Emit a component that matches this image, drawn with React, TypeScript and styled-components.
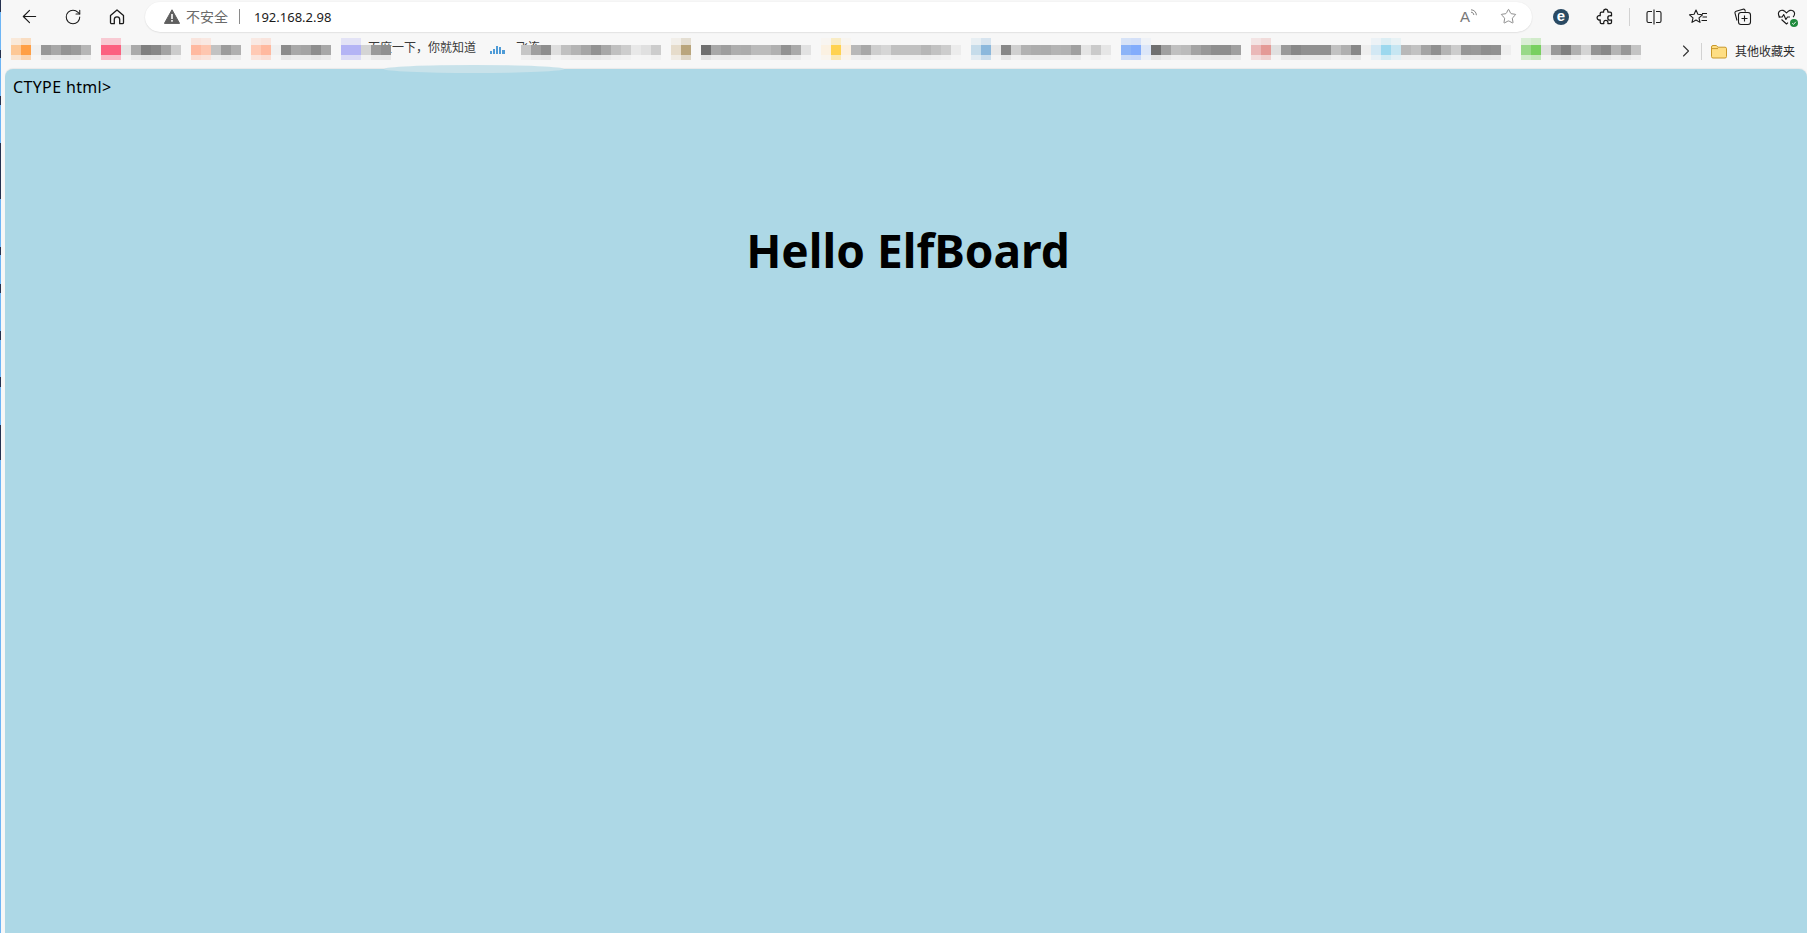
import React from 'react';
import styled, { createGlobalStyle } from 'styled-components';
import { ArrowLeft, RotateCw, Star, ChevronRight } from 'lucide-react';

const UI_FONT = '"Noto Sans", "Noto Sans CJK SC", sans-serif';

// one entry per 10px column of the blurred favourites, starting at x = 11
const MOSAIC: string[] = [
  '#fdc896', '#ff9f45', '#f0f0f0', '#989898', '#a8a8a8', '#949494', '#9c9c9c', '#b6b6b6', '',
  '#fc6180', '#fc6180', '#e4e4e4', '#aaaaaa', '#808080', '#888888', '#a4a4a4', '#cccccc', '',
  '#ffb9a0', '#fec6b0', '#c2c2c2', '#9c9c9c', '#b0b0b0', '',
  '#ffcab5', '#ffb99f', '#f0f0f0', '#8c8c8c', '#a8a8a8', '#a4a4a4', '#8e8e8e', '#a8a8a8', '',
  '#b4b4f5', '#b4b4f5', '#d4d4d4', '#9a9a9a', '#909090',
  '', '', '', '', '', '', '', '', '', '', '', '', '',
  '#c6c6c6', '#9f9f9f', '#8e8e8e', '#dedede', '#c0c0c0', '#b4b4b4', '#a6a6a6', '#929292', '#a8a8a8', '#c0c0c0', '#cdcdcd', '#e8e8e8',
  '#e0e0e0', '#cccccc', '',
  '#e6dccb', '#b9a57c', '',
  '#707070', '#a8a8a8', '#9e9e9e', '#aeaeae', '#acacac', '#bababa', '#bababa', '#b0b0b0', '#929292', '#aaaaaa', '#e2e2e2', '',
  '#fbf1e2', '#ffd250', '#fbefdf', '#b8b8b8', '#a8a8a8', '#cecece', '#d6d6d6', '#c0c0c0', '#c0c0c0', '#c0c0c0', '#b6b6b6', '#c2c2c2', '#cdcdcd', '#ececec', '',
  '#c6dcea', '#8cb8dc', '#e8e8e8', '#888888', '#d0d0d0', '#b2b2b2', '#adadad', '#acacac', '#b4b4b4', '#b2b2b2', '#a0a0a0', '#e4e4e4', '#cacaca', '#e6e6e6', '',
  '#8cb4f8', '#82acfc', '#dce6f8', '#707070', '#a0a0a0', '#c0c0c0', '#bbbbbb', '#a4a4a4', '#989898', '#8e8e8e', '#8e8e8e', '#a0a0a0', '',
  '#eab8b8', '#e49a96', '#e0e0e0', '#9a9a9a', '#888888', '#909090', '#909090', '#909090', '#c2c2c2', '#b0b0b0', '#888888', '#eeeeee',
  '#d2e8f4', '#9cd8ee', '#c6e6f2', '#b8b8b8', '#c2c2c2', '#a4a4a4', '#909090', '#b4b4b4', '#cccccc', '#969696', '#999999', '#8e8e8e', '#919191', '#eeeeee', '',
  '#98d988', '#78d060', '#e0e0e0', '#989898', '#808080', '#b0b0b0', '#d4d4d4', '#949494', '#888888', '#b4b4b4', '#989898', '#c4c4c4',
];

// mix a colour toward the bar background, for the smeared rows around the main one
const fade = (hex: string, keep: number) => {
  if (!hex) return 'transparent';
  const base = [247, 247, 247];
  const parts = [1, 3, 5].map((i, n) => {
    const v = parseInt(hex.slice(i, i + 2), 16);
    return Math.round(v * keep + base[n] * (1 - keep));
  });
  return `rgb(${parts.join(',')})`;
};

const isTinted = (hex: string) => {
  if (!hex) return false;
  return hex.slice(1, 3) !== hex.slice(3, 5) || hex.slice(3, 5) !== hex.slice(5, 7);
};

const GlobalStyle = createGlobalStyle`
  html, body {
    margin: 0;
    height: 100%;
    overflow: hidden;
  }
  #root {
    height: 100%;
  }
`;

const Screen = styled.div`
  display: flex;
  height: 933px;
  overflow: hidden;
  background: #f7f7f7;
  font-family: ${UI_FONT};
`;

const DesktopEdge = styled.div`
  flex: 0 0 1px;
  background: linear-gradient(
    to bottom,
    #25314f 0 12px, #6db5f5 12px 50px,
    #25314f 50px 58px, #6db5f5 58px 96px,
    #25314f 96px 105px, #6db5f5 105px 143px,
    #25314f 143px 199px, #6db5f5 199px 247px,
    #25314f 247px 255px, #6db5f5 255px 284px,
    #25314f 284px 293px, #6db5f5 293px 331px,
    #25314f 331px 340px, #6db5f5 340px 377px,
    #25314f 377px 387px, #6db5f5 387px 425px,
    #25314f 425px 460px, #6db5f5 460px
  );
`;

const Browser = styled.div`
  position: relative;
  flex: 1;
  display: flex;
  flex-direction: column;
  min-width: 0;
`;

const Toolbar = styled.div`
  display: flex;
  align-items: center;
  height: 32px;
  padding-top: 1px;
  box-sizing: border-box;
`;

const ToolButton = styled.div<{ $width: number }>`
  flex: 0 0 ${(p) => p.$width}px;
  display: flex;
  align-items: center;
  justify-content: center;
  position: relative;
  height: 30px;
  color: #1a1a1a;
`;

const NavGroup = styled.div`
  display: flex;
  flex: 0 0 144px;
  padding-left: 6px;
  box-sizing: border-box;
`;

const AddressBar = styled.div`
  flex: 0 0 1387px;
  height: 30px;
  display: flex;
  align-items: center;
  background: #fff;
  border-radius: 15px;
  box-shadow: 0 0.5px 1.5px rgba(0, 0, 0, 0.14);
  padding-left: 19px;
  box-sizing: border-box;
`;

const SecurityLabel = styled.span`
  margin-left: 6px;
  font-size: 14px;
  color: #6a6a6a;
  line-height: 1;
`;

const AddressDivider = styled.span`
  width: 1px;
  height: 15px;
  margin: 0 14px 0 11px;
  background: #8a8a8a;
`;

const Url = styled.span`
  font-size: 13px;
  color: #1b1b1b;
  flex: 1;
`;

const ReadAloud = styled.span`
  position: relative;
  width: 18px;
  height: 18px;
  margin-right: 22px;
  font-size: 15px;
  line-height: 18px;
  color: #777;
  font-family: "Liberation Sans", sans-serif;
`;

const Waves = styled.svg`
  position: absolute;
  top: 1px;
  left: 10px;
`;

const StarSlot = styled.span`
  display: flex;
  margin-right: 15px;
  color: #6e6e6e;
`;

const ToolGroup = styled.div`
  display: flex;
  align-items: center;
  padding-left: 7px;
`;

const ToolDivider = styled.span`
  flex: 0 0 1px;
  height: 18px;
  margin: 0 2px;
  background: #d2d2d2;
`;

const EdgeBadge = styled.span`
  width: 16px;
  height: 16px;
  border-radius: 50%;
  background: #2a4a63;
  color: #fff;
  font: bold 15px/14px "Liberation Sans", sans-serif;
  text-align: center;
`;

const HealthDot = styled.svg`
  position: absolute;
  left: 26px;
  top: 17px;
`;

const FavoritesBar = styled.div`
  position: relative;
  display: flex;
  align-items: flex-start;
  height: 37px;
  padding: 6px 0 0 10px;
  box-sizing: border-box;
`;

const Mosaic = styled.div`
  position: relative;
  flex: 0 0 1630px;
  display: grid;
  grid-auto-flow: column;
  grid-template-rows: 7px 10px 5px;
  grid-auto-columns: 10px;
`;

const Cell = styled.span<{ $color: string }>`
  position: relative;
  background: ${(p) => p.$color};
`;

const PeekLabel = styled.span<{ $left: number }>`
  position: absolute;
  left: ${(p) => p.$left}px;
  top: 3px;
  font-size: 12px;
  line-height: 13px;
  color: #3a3a3a;
  white-space: nowrap;
`;

const CloudIcon = styled.svg`
  position: absolute;
  left: 479px;
  top: 8px;
`;

const FavoritesEnd = styled.div`
  flex: 1;
  display: flex;
  align-items: center;
  height: 26px;
  color: #333;
`;

const ChevronSlot = styled.span`
  display: flex;
  margin-left: 35px;
  color: #333;
`;

const EndDivider = styled.span`
  width: 1px;
  height: 17px;
  margin: 0 9px 0 5px;
  background: #d2d2d2;
`;

const FolderLabel = styled.span`
  margin-left: 8px;
  font-size: 12px;
  color: #2b2b2b;
  white-space: nowrap;
`;

const Smear = styled.div`
  position: absolute;
  left: 383px;
  top: 65px;
  width: 180px;
  height: 8px;
  border-radius: 50%;
  background: #c8e2ea;
  z-index: 2;
`;

const ContentWell = styled.div`
  flex: 1;
  padding-left: 4px;
  min-height: 0;
`;

const Content = styled.main`
  height: 100%;
  box-sizing: border-box;
  background: #add8e6;
  border-top-left-radius: 8px;
  border-top-right-radius: 8px;
  box-shadow: 0 -1px 1px rgba(0, 0, 0, 0.06);
  padding: 8px;
  color: #000;
`;

const DoctypeLeftover = styled.div`
  font-size: 16px;
  line-height: 20px;
  letter-spacing: 0.35px;
`;

const Title = styled.h1`
  margin: 123px 0 0 4px;
  font-size: 46px;
  line-height: 60px;
  font-weight: 700;
  text-align: center;
`;

const HomeIcon = () => (
  <svg width="18" height="18" viewBox="0 0 18 18" fill="none" stroke="currentColor" strokeWidth="1.3" strokeLinejoin="round">
    <path d="M2.5 7.6 9 2l6.5 5.6v6.9a1.2 1.2 0 0 1-1.2 1.2h-2.6v-4.2a2.7 2.7 0 0 0-5.4 0v4.2H3.7a1.2 1.2 0 0 1-1.2-1.2z" />
  </svg>
);

const WarningIcon = () => (
  <svg width="16" height="15" viewBox="0 0 16 15">
    <path d="M8 .8 15.6 14.4H.4z" fill="#5f5f5f" stroke="#5f5f5f" strokeLinejoin="round" />
    <rect x="7.2" y="5" width="1.6" height="5" fill="#fff" />
    <rect x="7.2" y="11" width="1.6" height="1.7" fill="#fff" />
  </svg>
);

const PuzzleIcon = () => (
  <svg width="18" height="18" viewBox="0 0 18 18" fill="none" stroke="currentColor" strokeWidth="1.3" strokeLinejoin="round">
    <path d="M7.5 3.2a2.2 2.2 0 0 1 4.3-.4c.2.6 0 1 .1 1.4h2.3a1.3 1.3 0 0 1 1.3 1.3v2.3c-.5.1-1-.2-1.5-.1a2.2 2.2 0 0 0 0 4.4c.5.1 1-.2 1.500-.1v2.300a1.3 1.3 0 0 1-1.3 1.3h-2.3c.1-.5.2-1 .1-1.4a2.2 2.2 0 0 0-4.3 0c-.1.4 0 .9.1 1.4H5.5a1.3 1.3 0 0 1-1.3-1.3v-2.3c-.5-.1-.9.1-1.4 0a2.2 2.2 0 0 1 0-4.3c.5-.1.9.1 1.4 0V5.5a1.3 1.3 0 0 1 1.3-1.3h2.1c.1-.3 0-.6-.1-1z" />
  </svg>
);

const SplitIcon = () => (
  <svg width="18" height="18" viewBox="0 0 18 18" fill="none" stroke="currentColor" strokeWidth="1.1">
    <path d="M7 3.5H3.5A1.5 1.5 0 0 0 2 5v8a1.5 1.5 0 0 0 1.5 1.5H7M11 3.5h3.5A1.5 1.5 0 0 1 16 5v8a1.5 1.5 0 0 1-1.5 1.5H11M9 1.5v15" />
  </svg>
);

const FavoritesIcon = () => (
  <svg width="20" height="18" viewBox="0 0 20 18" fill="none" stroke="currentColor" strokeWidth="1.1" strokeLinejoin="round">
    <path d="M8 2l1.9 4.3 4.6.5-3.5 3 1 4.6L8 12l-4 2.4 1-4.6-3.5-3 4.6-.5z" />
    <path d="M14 5.5h5M14.5 9h4.5M13.5 12.5H19" />
  </svg>
);

const CollectionsIcon = () => (
  <svg width="19" height="19" viewBox="0 0 19 19" fill="none" stroke="currentColor" strokeWidth="1.1" strokeLinejoin="round">
    <path d="M4 13.5 2 6.2a1.6 1.6 0 0 1 1.1-2L10 2.2a1.6 1.6 0 0 1 2 1.1l.4 1.4" />
    <rect x="5.5" y="5.5" width="12" height="12" rx="2.5" />
    <path d="M11.5 8.5v6M8.5 11.5h6" />
  </svg>
);

const HealthIcon = () => (
  <svg width="19" height="18" viewBox="0 0 19 18" fill="none" stroke="currentColor" strokeWidth="1.1" strokeLinejoin="round">
    <path d="M3 9.5C1.5 7.8 1.2 6.4 1.5 5 2 3 4 1.8 6 2.400c1.4.4 2.5 1.4 3.5 2.6 1-1.2 2.1-2.2 3.5-2.6 2-.6 4 .6 4.5 2.6.3 1.4-.2 2.8-1.4 4.2" />
    <path d="M1.5 9h3.7l1.5-2.5 2.2 5 1.6-2.5h2.5M4.5 11.5 9.5 16l1.5-1.3" />
  </svg>
);

const FolderIcon = () => (
  <svg width="16" height="15" viewBox="0 0 16 15">
    <path d="M.5 3a1.5 1.5 0 0 1 1.5-1.5h3.2L7 3.2h7A1.5 1.5 0 0 1 15.5 4.7v7.8A1.5 1.5 0 0 1 14 14H2a1.5 1.5 0 0 1-1.5-1.5z" fill="#fede84" stroke="#c9982a" />
    <path d="M.5 4.6H7" stroke="#c9982a" fill="none" />
  </svg>
);

const App: React.FC = () => (
  <>
    <GlobalStyle />
    <Screen>
      <DesktopEdge />
      <Browser>
        <Toolbar>
          <NavGroup>
            <ToolButton $width={44}><ArrowLeft size={21} strokeWidth={1.3} /></ToolButton>
            <ToolButton $width={44}><RotateCw size={18} strokeWidth={1.4} /></ToolButton>
            <ToolButton $width={44}><HomeIcon /></ToolButton>
          </NavGroup>
          <AddressBar>
            <WarningIcon />
            <SecurityLabel>不安全</SecurityLabel>
            <AddressDivider />
            <Url>192.168.2.98</Url>
            <ReadAloud>
              A
              <Waves width="8" height="8" viewBox="0 0 8 8" fill="none" stroke="#777" strokeWidth="0.9">
                <path d="M1 3.2c1.6 0 2.8 1.2 2.8 2.8M1 .8c3 0 5.4 2.4 5.4 5.4" />
              </Waves>
            </ReadAloud>
            <StarSlot><Star size={17} strokeWidth={1.1} /></StarSlot>
          </AddressBar>
          <ToolGroup>
            <ToolButton $width={44}><EdgeBadge>e</EdgeBadge></ToolButton>
            <ToolButton $width={44}><PuzzleIcon /></ToolButton>
            <ToolDivider />
            <ToolButton $width={44}><SplitIcon /></ToolButton>
            <ToolButton $width={44}><FavoritesIcon /></ToolButton>
            <ToolButton $width={44}><CollectionsIcon /></ToolButton>
            <ToolButton $width={44}>
              <HealthIcon />
              <HealthDot width="8" height="8" viewBox="0 0 8 8">
                <circle cx="4" cy="4" r="4" fill="#1f8a3c" />
                <path d="M2.2 4.2 3.5 5.4 5.8 2.8" fill="none" stroke="#fff" strokeWidth="0.9" />
              </HealthDot>
            </ToolButton>
          </ToolGroup>
        </Toolbar>
        <FavoritesBar>
          <Mosaic>
            <PeekLabel $left={357}>百度一下，你就知道</PeekLabel>
            <PeekLabel $left={505}>飞连</PeekLabel>
            <CloudIcon width="16" height="8" viewBox="0 0 16 8" fill="#4f9bd6">
              <rect x="0" y="5" width="2" height="3" />
              <rect x="3" y="3" width="2" height="5" />
              <rect x="6" y="0" width="2" height="8" />
              <rect x="9" y="1" width="2" height="7" />
              <rect x="12" y="4" width="3" height="4" />
            </CloudIcon>
            {MOSAIC.flatMap((color, i) => [
              <Cell key={`t${i}`} $color={isTinted(color) ? fade(color, 0.3) : 'transparent'} />,
              <Cell key={`m${i}`} $color={color || 'transparent'} />,
              <Cell key={`b${i}`} $color={fade(color, isTinted(color) ? 0.4 : 0.15)} />,
            ])}
          </Mosaic>
          <FavoritesEnd>
            <ChevronSlot><ChevronRight size={20} strokeWidth={1.3} /></ChevronSlot>
            <EndDivider />
            <FolderIcon />
            <FolderLabel>其他收藏夹</FolderLabel>
          </FavoritesEnd>
        </FavoritesBar>
        <Smear />
        <ContentWell>
          <Content>
            <DoctypeLeftover>CTYPE html&gt;</DoctypeLeftover>
            <Title>Hello ElfBoard</Title>
          </Content>
        </ContentWell>
      </Browser>
    </Screen>
  </>
);

export default App;
